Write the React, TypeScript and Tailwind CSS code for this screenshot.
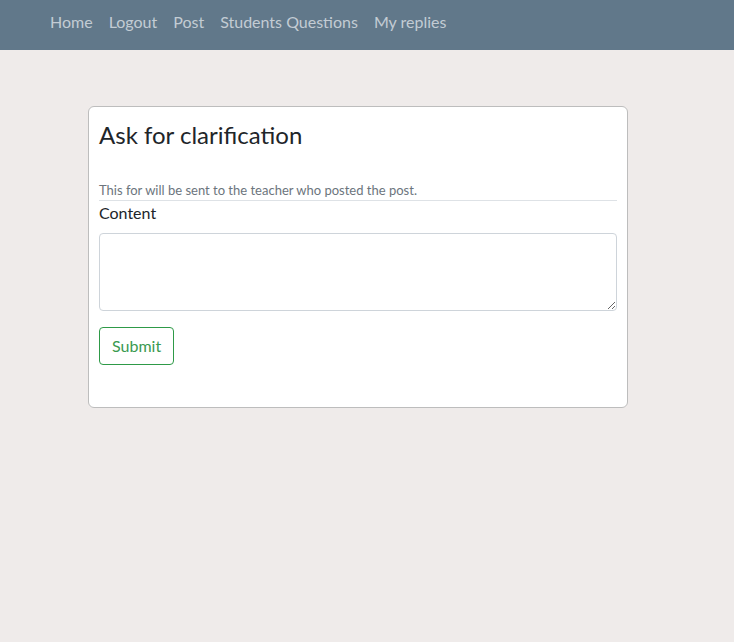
const App = () => {
  return (
    <div className="min-h-screen w-full bg-[#efebea] font-['Lato',sans-serif] text-[#212529]">
      <nav className="h-[50px] w-full bg-[#61788a] flex items-center px-[50px]">
        <ul className="flex items-center gap-4 text-[16px] text-[#c3ccd4] -mt-[6px]">
          <li>Home</li>
          <li>Logout</li>
          <li>Post</li>
          <li>Students Questions</li>
          <li>My replies</li>
        </ul>
      </nav>

      <div className="pl-[88px] pt-[56px]">
        <div className="w-[540px] h-[302px] bg-white border border-[#bdbdbd] rounded-[6px] px-[10px] pt-[13px]">
          <h2 className="text-[24px] leading-[30px]">Ask for clarification</h2>
          <p className="mt-[31px] text-[13px] leading-[18px] text-[#6c757d] border-b border-[#dee2e6] pb-[1px]">
            This for will be sent to the teacher who posted the post.
          </p>
          <label className="block mt-[0px] text-[16px] leading-[24px]">Content</label>
          <textarea className="mt-[8px] block w-full h-[78px] border border-[#ced4da] rounded-[4px] bg-white resize-y" />
          <button className="mt-[16px] h-[38px] px-[12px] border border-[#2e9a47] rounded-[4px] text-[16px] text-[#3a9a50] bg-white">
            Submit
          </button>
        </div>
      </div>
    </div>
  );
};

export default App;
